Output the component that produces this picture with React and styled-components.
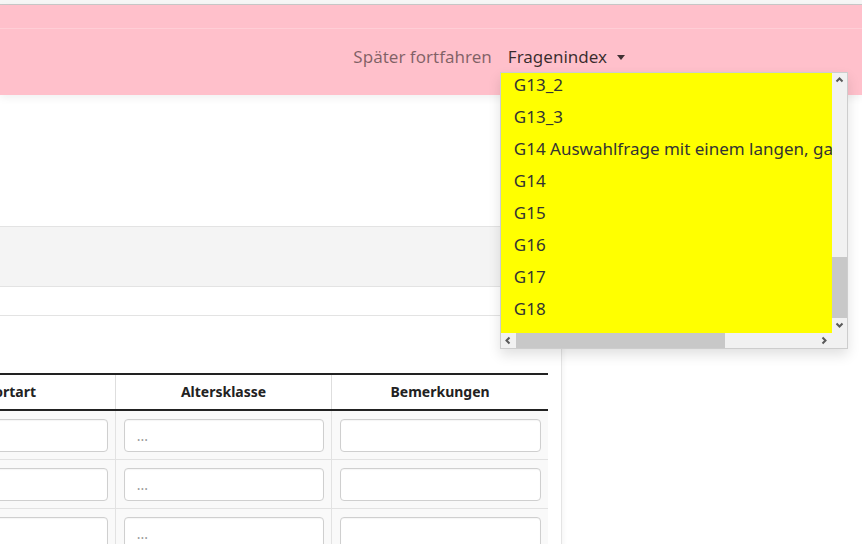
import React, { useLayoutEffect, useRef, useState } from "react";
import styled, { createGlobalStyle } from "styled-components";

const Global = createGlobalStyle`
  html, body {
    margin: 0;
    padding: 0;
    background: #fff;
    overflow: hidden;
  }
  body {
    font-family: "Noto Sans", "Open Sans", sans-serif;
    color: #333;
  }
  * { box-sizing: border-box; }
`;

const TopStrip = styled.div`
  height: 5px;
  background: #f6f6f6;
  border-bottom: 1px solid #c9c9c9;
`;

const Header = styled.header`
  height: 90px;
  background: #ffc0cb;
  box-shadow: 0 3px 8px rgba(0, 0, 0, 0.06);
  position: relative;
  z-index: 2;
`;

const HeaderTop = styled.div`
  height: 24px;
  border-bottom: 1px solid rgba(255, 255, 255, 0.22);
`;

const Nav = styled.nav`
  display: flex;
  justify-content: flex-end;
  align-items: center;
  padding: 16px 229px 0 0;
`;

const NavItem = styled.div`
  position: relative;
`;

const NavLink = styled.span`
  display: flex;
  align-items: center;
  gap: 10px;
  padding: 0 8px;
  height: 24px;
  line-height: 24px;
  font-size: 17px;
  color: ${(p) => (p.$active ? "rgba(0,0,0,0.78)" : "rgba(0,0,0,0.5)")};
  cursor: pointer;
  white-space: nowrap;
`;

const Caret = styled.span`
  width: 0;
  height: 0;
  border-left: 4.5px solid transparent;
  border-right: 4.5px solid transparent;
  border-top: 5px solid rgba(0, 0, 0, 0.75);
  margin-top: 1px;
`;

const Menu = styled.div`
  position: absolute;
  top: calc(100% + 3px);
  left: 0;
  width: 348px;
  height: 277px;
  display: grid;
  grid-template-columns: 1fr 15px;
  grid-template-rows: 1fr 15px;
  background: #f1f1f1;
  border: 1px solid rgba(0, 0, 0, 0.15);
  box-shadow: 0 6px 12px rgba(0, 0, 0, 0.12);
  z-index: 10;
`;

const Viewport = styled.div`
  overflow: hidden;
  background: #fff;
`;

const MenuList = styled.div`
  background: #ffff00;
  padding: 8px 0;
  width: max-content;
  min-width: 100%;
`;

const MenuItem = styled.div`
  padding: 4px 30px 4px 13px;
  line-height: 24px;
  font-size: 17px;
  color: #333;
  white-space: nowrap;
  cursor: pointer;
`;

const Bar = styled.div`
  display: flex;
  flex-direction: ${(p) => (p.$vertical ? "column" : "row")};
  background: #f1f1f1;
`;

const Track = styled.div`
  flex: 1;
  display: flex;
  flex-direction: ${(p) => (p.$vertical ? "column" : "row")};
  justify-content: ${(p) => (p.$end ? "flex-end" : "flex-start")};
`;

const Thumb = styled.div`
  background: #c8c8c8;
  flex: none;
  ${(p) => (p.$vertical ? "width: 100%;" : "height: 100%;")}
`;

const ArrowButton = styled.div`
  width: 15px;
  height: 15px;
  flex: none;
  display: flex;
  align-items: center;
  justify-content: center;
`;

const Corner = styled.div`
  background: #f1f1f1;
`;

const Main = styled.main`
  display: flex;
  margin-left: -116px;
`;

const Panel = styled.section`
  width: 678px;
  min-height: 460px;
  background: #fff;
  border-right: 1px solid #e4e4e4;
  box-shadow: 2px 0 5px rgba(0, 0, 0, 0.04);
`;

const Intro = styled.div`
  height: 131px;
`;

const Band = styled.div`
  height: 61px;
  background: #f4f4f4;
  border-top: 1px solid #e3e3e3;
  border-bottom: 1px solid #e3e3e3;
`;

const SubRow = styled.div`
  height: 29px;
  border-bottom: 1px solid #e3e3e3;
`;

const TableWrap = styled.div`
  padding: 57px 13px 0 15px;
`;

const Table = styled.table`
  width: 649px;
  table-layout: fixed;
  border-collapse: collapse;
  font-size: 14px;
`;

const Th = styled.th`
  padding: 8px;
  line-height: 18px;
  font-weight: 700;
  color: #222;
  text-align: center;
  background: #fff;
  border-top: 2px solid #222;
  border-bottom: 2px solid #222;
  border-left: 1px solid #dedede;
  &:first-child { border-left: none; }
`;

const Tr = styled.tr`
  background: #f9f9f9;
`;

const Td = styled.td`
  padding: 8px 7px 7px 8px;
  border-bottom: 1px solid #e2e2e2;
  border-left: 1px solid #e2e2e2;
  &:first-child { border-left: none; }
`;

const Input = styled.input`
  display: block;
  width: 100%;
  height: 33px;
  padding: 6px 12px;
  font: inherit;
  font-size: 14px;
  color: #555;
  background: #fff;
  border: 1px solid #cfcfcf;
  border-radius: 4px;
  box-shadow: inset 0 1px 1px rgba(0, 0, 0, 0.04);
  &::placeholder { color: #999; }
`;

const arrowPoints = {
  up: "1.5,5.5 4.5,2.5 7.5,5.5",
  down: "1.5,2.5 4.5,5.5 7.5,2.5",
  left: "5.5,1.5 2.5,4.5 5.5,7.5",
  right: "2.5,1.5 5.5,4.5 2.5,7.5",
};

const Arrow = ({ dir }) => (
  <ArrowButton>
    <svg width="9" height="9" viewBox="0 0 9 9">
      <polyline
        points={arrowPoints[dir]}
        fill="none"
        stroke="#5a5a5a"
        strokeWidth="2"
      />
    </svg>
  </ArrowButton>
);

const questions = [
  "G1", "G2", "G2_1", "G3", "G3_1", "G4", "G4_1", "G5", "G5_1", "G6",
  "G7", "G8", "G8_1", "G9", "G10", "G10_1", "G11", "G11_1", "G12",
  "G12_1", "G13", "G13_1", "G13_2", "G13_3",
  "G14 Auswahlfrage mit einem langen, ganz langen Text",
  "G14", "G15", "G16", "G17", "G18",
];

const rows = [0, 1, 2];

const App = () => {
  const viewRef = useRef(null);
  const [thumbs, setThumbs] = useState({ v: 61, h: 208 });

  useLayoutEffect(() => {
    const el = viewRef.current;
    if (!el) return;
    el.scrollTop = el.scrollHeight;
    el.scrollLeft = 0;
    const vTrack = el.clientHeight - 30;
    const hTrack = el.clientWidth - 30;
    setThumbs({
      v: Math.round((vTrack * el.clientHeight) / el.scrollHeight),
      h: Math.round((hTrack * el.clientWidth) / el.scrollWidth),
    });
  }, []);

  return (
    <>
      <Global />
      <TopStrip />
      <Header>
        <HeaderTop />
        <Nav>
          <NavItem>
            <NavLink>Später fortfahren</NavLink>
          </NavItem>
          <NavItem>
            <NavLink $active>
              Fragenindex <Caret />
            </NavLink>
            <Menu>
              <Viewport ref={viewRef}>
                <MenuList>
                  {questions.map((q) => (
                    <MenuItem key={q}>{q}</MenuItem>
                  ))}
                </MenuList>
              </Viewport>
              <Bar $vertical>
                <Arrow dir="up" />
                <Track $vertical $end>
                  <Thumb $vertical style={{ height: thumbs.v }} />
                </Track>
                <Arrow dir="down" />
              </Bar>
              <Bar>
                <Arrow dir="left" />
                <Track>
                  <Thumb style={{ width: thumbs.h }} />
                </Track>
                <Arrow dir="right" />
              </Bar>
              <Corner />
            </Menu>
          </NavItem>
        </Nav>
      </Header>
      <Main>
        <Panel>
          <Intro />
          <Band />
          <SubRow />
          <TableWrap>
            <Table>
              <thead>
                <tr>
                  <Th>Sportart</Th>
                  <Th>Altersklasse</Th>
                  <Th>Bemerkungen</Th>
                </tr>
              </thead>
              <tbody>
                {rows.map((r) => (
                  <Tr key={r}>
                    <Td><Input type="text" /></Td>
                    <Td><Input type="text" placeholder="..." /></Td>
                    <Td><Input type="text" /></Td>
                  </Tr>
                ))}
              </tbody>
            </Table>
          </TableWrap>
        </Panel>
      </Main>
    </>
  );
};

export default App;
